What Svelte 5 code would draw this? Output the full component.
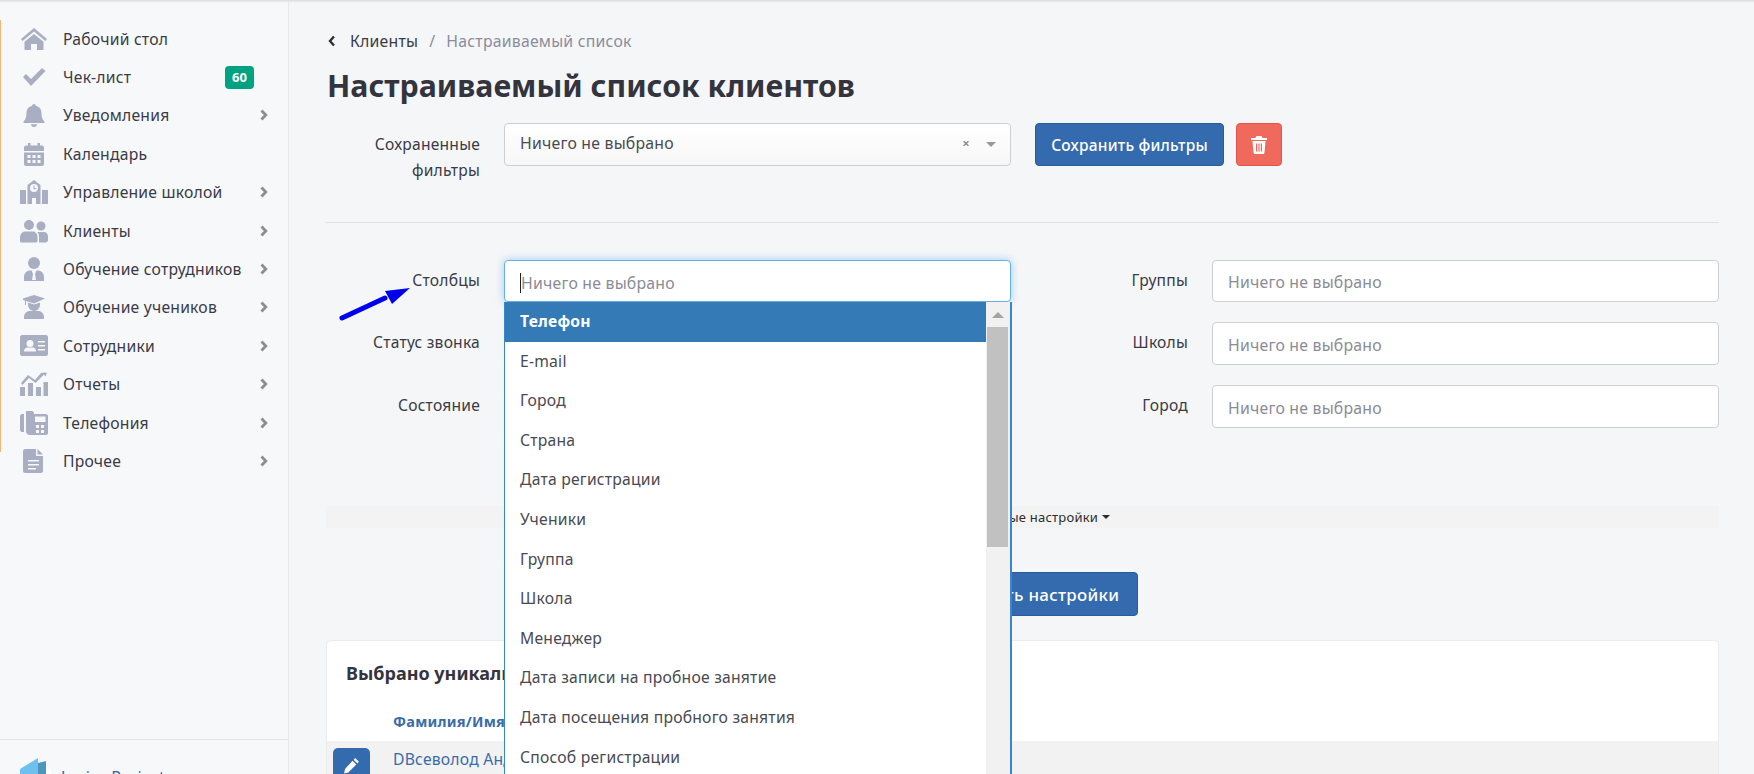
<script>
  const menu = [
    { label: 'Рабочий стол', icon: 'home' },
    { label: 'Чек-лист', icon: 'check', badge: 60 },
    { label: 'Уведомления', icon: 'bell', more: true },
    { label: 'Календарь', icon: 'calendar' },
    { label: 'Управление школой', icon: 'school', more: true },
    { label: 'Клиенты', icon: 'users', more: true },
    { label: 'Обучение сотрудников', icon: 'tie', more: true },
    { label: 'Обучение учеников', icon: 'grad', more: true },
    { label: 'Сотрудники', icon: 'card', more: true },
    { label: 'Отчеты', icon: 'chart', more: true },
    { label: 'Телефония', icon: 'fax', more: true },
    { label: 'Прочее', icon: 'file', more: true },
  ];

  const options = [
    'Телефон',
    'E-mail',
    'Город',
    'Страна',
    'Дата регистрации',
    'Ученики',
    'Группа',
    'Школа',
    'Менеджер',
    'Дата записи на пробное занятие',
    'Дата посещения пробного занятия',
    'Способ регистрации',
  ];
</script>

{#snippet icon(name)}
  <svg class="ico" viewBox="0 0 28 24" fill="#a9aec2">
    {#if name === 'home'}
      <path d="M14 1 1 12l1.600 2L14 4.600 25.400 14l1.600-2z" />
      <path d="M14 7 4.500 14.800V23H11v-6h6v6h6.500v-8.200z" />
    {:else if name === 'check'}
      <path d="m3 12 3-3 5 5L22 3l3.500 3L11 21z" />
    {:else if name === 'bell'}
      <path d="M14 1c-1 0-1.800.8-1.800 1.800C8.500 3.600 6.500 6.500 6.500 10c0 5-1.500 7-3 8.500V20h21v-1.500c-1.500-1.500-3-3.500-3-8.500 0-3.500-2-6.400-5.700-7.200C15.800 1.800 15 1 14 1z" />
      <path d="M11 21.200h6c0 1.500-1.300 2.800-3 2.800s-3-1.300-3-2.800z" />
    {:else if name === 'calendar'}
      <path fill-rule="evenodd" d="M8 1h2.500v2.500h7V1H20v2.500h2c1 0 2 1 2 2V9H4V5.500c0-1 1-2 2-2h2zM4 10.500h20V22c0 1-1 2-2 2H6c-1 0-2-1-2-2zM7.500 13v3h3v-3zm5 0v3h3v-3zm5 0v3h3v-3zm-10 5v3h3v-3zm5 0v3h3v-3zm5 0v3h3v-3z" />
    {:else if name === 'school'}
      <path fill-rule="evenodd" d="M14 0 7.500 5v19H12v-6h4v6h4.500V5zm0 4a4 4 0 1 1 0 8 4 4 0 0 1 0-8z" />
      <path d="M0 10h6v14H0zM22 10h6v14h-6z" />
      <path d="M13.500 5.500h1v2.700h2v1h-3z" />
    {:else if name === 'users'}
      <circle cx="9" cy="6" r="5" />
      <circle cx="21" cy="7" r="4.500" />
      <path d="M0 22v-4c0-3 2.500-5.500 5-5.500h8c2.500 0 4.500 2.500 4.500 5.500v4c0 1-1 1.500-1.500 1.500H1.500C.8 23.500 0 23 0 22z" />
      <path d="M19 23.500v-6c0-2-.8-3.500-1.800-4.500H24c2.300 0 4 2 4 4.500V21c0 1.500-1 2.500-2.500 2.500z" />
    {:else if name === 'tie'}
      <circle cx="14" cy="6" r="6" />
      <path d="M4 24v-4c0-4 3-6.500 6-6.500h1.500L13 17l-1 6h4l-1-6 1.500-3.500H18c3 0 6 2.500 6 6.500v4z" />
    {:else if name === 'grad'}
      <path d="M14 0 3 3.500V5l2 .6V10h1V6l8 2.500L25 3.500z" />
      <path d="M8 7.500V10a6 6 0 0 0 12 0V7.500l-6 2z" />
      <path d="M4 24v-2c0-3.500 3-6 5.500-6h9c2.500 0 5.500 2.500 5.500 6v2z" />
    {:else if name === 'card'}
      <path fill-rule="evenodd" d="M2 1h24c1 0 2 1 2 2v17c0 1-1 2-2 2H2c-1 0-2-1-2-2V3c0-1 1-2 2-2zm8 5a3.500 3.500 0 1 0 0 7 3.500 3.500 0 0 0 0-7zM4 17.500h12c0-3-2-4-3-4H7c-1 0-3 1-3 4zM18 7v1.500h7V7zm0 4v1.500h7V11zm0 4v1.500h7V15z" />
    {:else if name === 'chart'}
      <path d="M0 15h5v9H0zM8 11h5v13H8zM16 15h5v9h-5zM23.500 10H28v14h-4.500z" />
      <path d="M1 11 8 3l7 5 6-7 4-.5 2 .5-1.500 3.500L24 2.500 15.500 11 9 6l-6.500 7z" />
    {:else if name === 'fax'}
      <path fill-rule="evenodd" d="M2 3h2v18H2c-1 0-2-1-2-2V5c0-1 1-2 2-2zM6 0h6c1 0 2 1 2 2v1h12c1 0 2 1 2 2v17c0 1-1 2-2 2H10c-2.500 0-4-1.500-4-4zm9 5.500V11h10.500V5.500zM16 14v3h3v-3zm5 0v3h3v-3zm-5 5v3h3v-3zm5 0v3h3v-3z" />
    {:else if name === 'file'}
      <path fill-rule="evenodd" d="M5 0h11v7h7v15c0 1-1 2-2 2H5c-1 0-2-1-2-2V2c0-1 1-2 2-2zm3 11v1.500h11V11zm0 4v1.500h11V15zm0 4v1.500h8V19z" />
      <path d="M17.500 0 23 5.500h-5.500z" />
    {/if}
  </svg>
{/snippet}

<div class="page">
  <aside class="sidebar">
    <nav class="nav">
      {#each menu as item}
        <div class="nav-item">
          <span class="nav-ico">{@render icon(item.icon)}</span>
          <span class="nav-label">{item.label}</span>
          {#if item.badge}
            <span class="badge">{item.badge}</span>
          {/if}
          {#if item.more}
            <svg class="chev" viewBox="0 0 8 12"><path d="M1.500 1.500 5.800 6l-4.300 4.500" fill="none" stroke="#8d8d8d" stroke-width="2.800" /></svg>
          {/if}
        </div>
      {/each}
    </nav>
    <div class="side-foot">
      <svg class="logo" viewBox="0 0 32 20">
        <path d="M0 11 18 0v20H0z" fill="#6fc0ee" />
        <path d="M18 5l8-2v17h-8z" fill="#4b97bb" />
        <path d="M26 11h5v9h-5z" fill="#fff" />
      </svg>
      <span class="foot-name">Junior Project</span>
    </div>
  </aside>

  <main class="main">
    <div class="crumbs">
      <svg class="back" viewBox="0 0 8 12"><path d="M6 1.500 2 6l4 4.500" fill="none" stroke="#2f3038" stroke-width="2.400" /></svg>
      <span class="crumb">Клиенты</span>
      <span class="crumb-sep">/</span>
      <span class="crumb-now">Настраиваемый список</span>
    </div>
    <h1>Настраиваемый список клиентов</h1>

    <div class="saved">
      <div class="lbl saved-lbl">Сохраненные фильтры</div>
      <div class="input select">
        <span>Ничего не выбрано</span>
        <span class="clear">×</span>
        <span class="caret"></span>
      </div>
      <button class="btn">Сохранить фильтры</button>
      <button class="btn-del" aria-label="Удалить">
        <svg viewBox="0 0 16 18" width="16" height="18" fill="#fff">
          <path d="M5.500 0h5l1 2H16v2H0V2h4.500z" />
          <path fill-rule="evenodd" d="M1.500 5h13l-1 11.500c0 .8-.7 1.500-1.500 1.500H4c-.8 0-1.500-.7-1.500-1.500zM5 7.500v8h1.200v-8zm2.400 0v8h1.200v-8zm2.400 0v8H11v-8z" />
        </svg>
      </button>
    </div>

    <div class="filters">
      <div class="lbl">Столбцы</div>
      <div class="field">
        <div class="input focus"><span class="cursor"></span><span class="ph">Ничего не выбрано</span></div>
        <div class="dropdown">
          <div class="opts">
            {#each options as opt, i}
              <div class="opt" class:active={i === 0}>{opt}</div>
            {/each}
          </div>
          <div class="scroll">
            <span class="up"></span>
            <span class="thumb"></span>
          </div>
        </div>
      </div>
      <div class="lbl">Группы</div>
      <div class="input"><span class="ph">Ничего не выбрано</span></div>

      <div class="lbl">Статус звонка</div>
      <div class="input"></div>
      <div class="lbl">Школы</div>
      <div class="input"><span class="ph">Ничего не выбрано</span></div>

      <div class="lbl">Состояние</div>
      <div class="input"></div>
      <div class="lbl">Город</div>
      <div class="input"><span class="ph">Ничего не выбрано</span></div>
    </div>

    <div class="more">Расширенные настройки <span class="more-caret"></span></div>

    <div class="apply"><button class="btn apply-btn">Применить настройки</button></div>

    <section class="card">
      <h3>Выбрано уникальных клиентов: 60</h3>
      <div class="thead">Фамилия/Имя</div>
      <div class="trow">
        <button class="btn-edit" aria-label="Изменить">
          <svg viewBox="0 0 16 16" width="17" height="17" fill="#fff">
            <path d="M11.500 1 15 4.500 13.500 6 10 2.500zM9 3.500 12.500 7 5 14.500 1 15.500l.9-4.100z" />
          </svg>
        </button>
        <span class="tname">DВсеволод Андреевич</span>
      </div>
    </section>
  </main>

  <!-- annotation arrow drawn over the form -->
  <svg class="arrow" viewBox="0 0 80 40" width="80" height="40">
    <path d="M9 33 52 13" stroke="#0000ee" stroke-width="5" stroke-linecap="round" fill="none" />
    <path d="M77 3 52 6l7 13z" fill="#0000ee" />
  </svg>
</div>

<style>
  :global(body) {
    margin: 0;
    background: #f5f6f8;
    font-family: 'Noto Sans', 'Open Sans', sans-serif;
    color: #3b3b46;
  }

  .page {
    display: flex;
    height: 774px;
    overflow: hidden;
    position: relative;
    letter-spacing: 0.22px;
  }

  .page::before {
    content: '';
    position: absolute;
    inset: 0 0 auto 0;
    height: 3px;
    background: linear-gradient(#dcdde0, rgba(245, 246, 248, 0));
    z-index: 5;
  }

  .arrow {
    position: absolute;
    left: 333px;
    top: 285px;
    z-index: 4;
  }

  .sidebar {
    width: 288px;
    flex-shrink: 0;
    display: flex;
    flex-direction: column;
    background: #f7f8fa;
    border-right: 1px solid #e8e9ee;
    position: relative;
  }

  .sidebar::before {
    content: '';
    position: absolute;
    left: 0;
    top: 20px;
    width: 1px;
    height: 432px;
    background: #f8b573;
  }

  .nav {
    padding-top: 19.500px;
    height: 739px;
    box-sizing: border-box;
    flex-shrink: 0;
  }

  .nav-item {
    height: 38.400px;
    display: flex;
    align-items: center;
    font-size: 15.700px;
    padding-left: 20px;
  }

  .nav-ico {
    width: 43px;
    flex-shrink: 0;
    display: flex;
  }

  .ico {
    width: 28px;
    height: 24px;
  }

  .nav-label {
    flex: 1;
    white-space: nowrap;
  }

  .badge {
    width: 29px;
    height: 23px;
    margin-right: 34px;
    border-radius: 4px;
    background: #00a37f;
    color: #fff;
    font-size: 13px;
    font-weight: 700;
    letter-spacing: 0;
    display: flex;
    align-items: center;
    justify-content: center;
  }

  .chev {
    width: 8px;
    height: 12px;
    margin-right: 20px;
  }

  .side-foot {
    border-top: 1px solid #e1e3e9;
    padding: 18px 0 0 20px;
    display: flex;
    align-items: flex-start;
    gap: 9px;
    flex-shrink: 0;
  }

  .logo {
    width: 32px;
    height: 20px;
    flex-shrink: 0;
  }

  .foot-name {
    font-size: 16px;
    color: #3d5fa8;
    margin-top: 8px;
    white-space: nowrap;
  }

  .main {
    flex: 1;
    min-width: 0;
    padding: 0 35px 0 37px;
  }

  .crumbs {
    display: flex;
    align-items: center;
    height: 20px;
    margin: 31px 0 0 2px;
    font-size: 15.800px;
    white-space: nowrap;
  }

  .back {
    width: 8px;
    height: 12px;
    margin-right: 14px;
  }

  .crumb-sep {
    margin: 0 11px;
    color: #8b8d9c;
  }

  .crumb-now {
    color: #8b8d9c;
  }

  h1 {
    margin: 12px 0 0 1px;
    height: 46px;
    line-height: 46px;
    font-size: 30.300px;
    font-weight: 700;
    letter-spacing: 0;
    color: #34343e;
    white-space: nowrap;
  }

  .saved {
    margin-top: 14px;
    display: flex;
    align-items: flex-start;
    height: 99px;
    border-bottom: 1px solid #dfe1e6;
  }

  .lbl {
    text-align: right;
    font-size: 15.600px;
    line-height: 26px;
    padding-top: 7px;
  }

  .saved-lbl {
    width: 154px;
    margin-right: 24px;
    padding-top: 8px;
    flex-shrink: 0;
  }

  .input {
    box-sizing: border-box;
    height: 100%;
    border: 1px solid #cfcfd2;
    border-radius: 4px;
    background: #fff;
    font-size: 15.800px;
    display: flex;
    align-items: center;
    padding: 2px 0 0 15px;
    white-space: nowrap;
  }

  .select {
    width: 507px;
    height: 43px;
    padding: 0 0 3px 15px;
    background: linear-gradient(#fff, #f7f7f8);
    color: #4a4a52;
  }

  .clear {
    margin-left: auto;
    color: #8f8f8f;
    font-weight: 700;
    font-size: 13px;
  }

  .caret {
    margin: 3px 14px 0 16px;
    border: 5px solid transparent;
    border-top-color: #999;
    border-bottom: 0;
  }

  .btn {
    height: 43px;
    padding: 0 10px;
    border: 1px solid #2a5c98;
    border-radius: 4px;
    background: #336bae;
    color: #fff;
    font: inherit;
    font-size: 15.500px;
    font-weight: 500;
    letter-spacing: 0.22px;
    white-space: nowrap;
  }

  .saved .btn {
    width: 189px;
    margin-left: 24px;
  }

  .btn-del {
    width: 46px;
    height: 43px;
    margin-left: 12px;
    padding: 0;
    border: 1px solid #e0574a;
    border-radius: 4px;
    background: #ef6a5c;
    display: flex;
    align-items: center;
    justify-content: center;
  }

  .filters {
    margin-top: 37px;
    display: grid;
    grid-template-columns: 154px 507px 153px 507px;
    grid-template-rows: 42px 43px 43px;
    column-gap: 24px;
    row-gap: 20px;
  }

  .field {
    position: relative;
  }

  .focus {
    border-color: #66afe9;
    box-shadow: 0 0 8px rgba(102, 175, 233, 0.6);
    padding-top: 3px;
  }

  .cursor {
    width: 1px;
    height: 20px;
    background: #222;
  }

  .ph {
    color: #8a8c96;
  }

  .dropdown {
    position: absolute;
    top: 100%;
    left: 0;
    width: 508px;
    height: 480px;
    box-sizing: border-box;
    border: solid #3a85d0;
    border-width: 0 2px 0 1px;
    background: #fff;
    display: flex;
    z-index: 3;
    overflow: hidden;
  }

  .opts {
    flex: 1;
  }

  .opt {
    height: 39.600px;
    line-height: 39.600px;
    padding-left: 15px;
    font-size: 15.700px;
    color: #4a4a52;
    white-space: nowrap;
  }

  .opt.active {
    background: #337ab7;
    color: #fff;
    font-weight: 700;
  }

  .scroll {
    width: 24px;
    background: #f1f1f1;
    position: relative;
  }

  .up {
    position: absolute;
    top: 10px;
    left: 6px;
    border: 6px solid transparent;
    border-bottom-color: #a3a3a3;
    border-top: 0;
  }

  .thumb {
    position: absolute;
    top: 25px;
    left: 1px;
    width: 21px;
    height: 220px;
    background: #c1c1c1;
  }

  .more {
    margin-top: 78px;
    height: 22px;
    background: #f3f3f3;
    font-size: 13px;
    color: #2c2c2c;
    display: flex;
    align-items: center;
    justify-content: center;
    gap: 4px;
  }

  .more-caret {
    border: 4px solid transparent;
    border-top-color: #2c2c2c;
    border-bottom: 0;
  }

  .apply {
    margin-top: 44px;
    display: flex;
    justify-content: center;
  }

  .apply-btn {
    width: 230px;
    height: 44px;
    font-size: 16.900px;
    letter-spacing: 0.3px;
  }

  .card {
    margin-top: 24px;
    height: 300px;
    background: #fff;
    border: 1px solid #ececef;
    border-radius: 5px;
  }

  h3 {
    margin: 20px 0 0 19px;
    font-size: 18px;
    line-height: 24px;
    font-weight: 700;
    letter-spacing: 0;
    color: #34343e;
    white-space: nowrap;
  }

  .thead {
    margin: 24px 0 0 66px;
    height: 24px;
    line-height: 24px;
    font-size: 14.500px;
    font-weight: 700;
    color: #3a6ca8;
  }

  .trow {
    margin-top: 8px;
    background: #f2f2f2;
    padding: 7px 0 0 6px;
    display: flex;
    gap: 23px;
    height: 60px;
    box-sizing: border-box;
  }

  .btn-edit {
    width: 37px;
    height: 38px;
    border: 0;
    padding: 0;
    border-radius: 5px;
    background: #336bae;
  }

  .tname {
    color: #3a6ca8;
    font-size: 15.700px;
    line-height: 22px;
  }
</style>
